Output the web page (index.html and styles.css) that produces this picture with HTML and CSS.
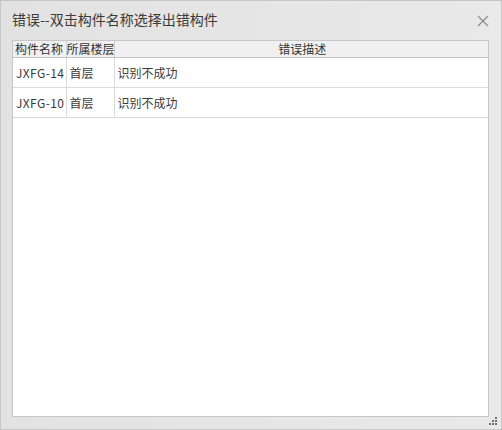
FILE: index.html
```html
<!DOCTYPE html>
<html>
<head>
<meta charset="utf-8">
<link rel="stylesheet" href="styles.css">
</head>
<body>
<div class="window">
  <div class="titlebar">
    <span class="title">错误--双击构件名称选择出错构件</span>
    <svg class="close" width="12" height="12" viewBox="0 0 12 12"><path d="M1 1 L11 11 M11 1 L1 11" stroke="#8a8a8a" stroke-width="1.2" fill="none"/></svg>
  </div>
  <div class="grid">
    <table>
      <colgroup><col class="k1"><col class="k2"><col></colgroup>
      <thead>
        <tr><th>构件名称</th><th class="c2">所属楼层</th><th class="c3">错误描述</th></tr>
      </thead>
      <tbody>
        <tr><td class="code">JXFG-14</td><td>首层</td><td>识别不成功</td></tr>
        <tr><td class="code">JXFG-10</td><td>首层</td><td>识别不成功</td></tr>
      </tbody>
    </table>
  </div>
  <div class="footer">
    <svg class="grip" width="10" height="10" viewBox="0 0 10 10" fill="#6e7378">
      <rect x="6" y="0" width="2" height="2"/>
      <rect x="3" y="3" width="2" height="2"/><rect x="6" y="3" width="2" height="2"/>
      <rect x="0" y="6" width="2" height="2"/><rect x="3" y="6" width="2" height="2"/><rect x="6" y="6" width="2" height="2"/>
    </svg>
  </div>
</div>
</body>
</html>
```
FILE: styles.css
```css
html, body { margin: 0; padding: 0; }
body { font-family: "Noto Sans CJK SC", "Noto Sans", sans-serif; color: #333; }
.window {
  width: 502px; height: 430px; box-sizing: border-box;
  border: 1px solid #c6c6c6;
  background: linear-gradient(to right, #e2e2e2, #e9e9e9);
  display: flex; flex-direction: column;
}
.titlebar {
  height: 39px; display: flex; align-items: center; justify-content: space-between;
  padding: 0 12px 0 11px; box-sizing: border-box;
}
.title { font-size: 14px; color: #3a3a3a; margin-top: -2px; }
.close { margin-top: 2px; margin-right: 0; }
.grid {
  margin: 0 12px 0 11px; height: 378px; box-sizing: border-box;
  border: 1px solid #c6c6c6; background: #fff;
}
table { border-collapse: collapse; width: 100%; table-layout: fixed; }
col.k1 { width: 53px; }
col.k2 { width: 48px; }
th, td { padding: 0 0 0 3px; text-align: left; font-weight: normal; white-space: nowrap; overflow: visible; }
th {
  font-size: 12px; height: 16px; line-height: 16px; background: #f0f0f0; color: #333;
  border-right: 1px solid #d0d0d0; border-bottom: 1px solid #c4c4c4; padding-left: 2px;
}
th.c2 { padding-left: 0; }
th.c3 { text-align: center; border-right: none; }
td {
  font-size: 12px; height: 29px; color: #3a3a3a;
  border-right: 1px solid #dadada; border-bottom: 1px solid #dadada;
}
td.code { letter-spacing: 0.4px; }
td:last-child { border-right: none; }
.footer { flex: 1; display: flex; justify-content: flex-end; align-items: flex-end; padding: 0 2px 2px 0; }
.grip { display: block; }
```
